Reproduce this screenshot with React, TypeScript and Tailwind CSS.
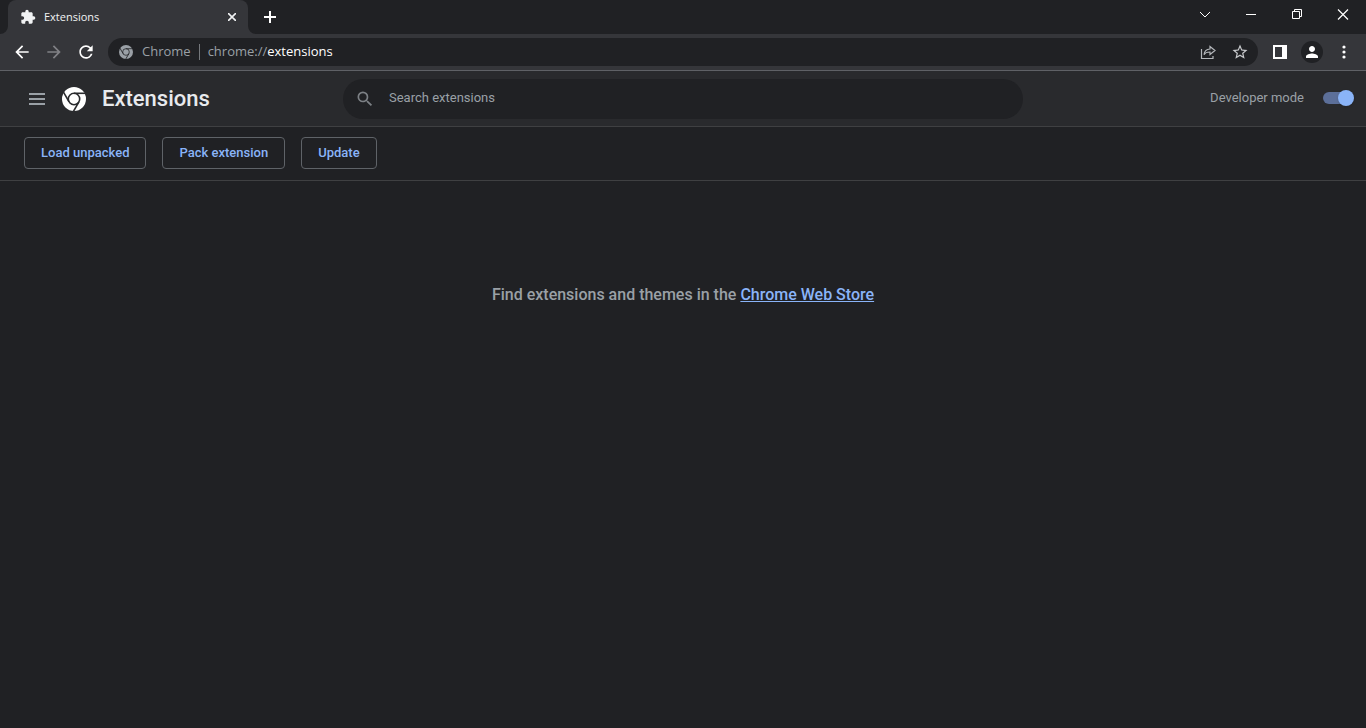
import { useState } from 'react';

function ChromeLogo({ className, bg, gap }: { className: string; bg: string; gap: number }) {
  return (
    <svg viewBox="0 0 24 24" className={className} aria-hidden="true">
      <circle cx="12" cy="12" r="12" fill="currentColor" />
      <g stroke={bg} strokeWidth={gap} fill="none">
        <circle cx="12" cy="12" r="5.7" />
        <path d="M12 6.3H24" />
        <path d="M12 6.3H24" transform="rotate(120 12 12)" />
        <path d="M12 6.3H24" transform="rotate(240 12 12)" />
      </g>
    </svg>
  );
}

function Icon({ d, className }: { d: string; className: string }) {
  return (
    <svg viewBox="0 0 24 24" fill="currentColor" className={className} aria-hidden="true">
      <path d={d} />
    </svg>
  );
}

const PUZZLE =
  'M20.5 11H19V7c0-1.1-.9-2-2-2h-4V3.5a2.5 2.5 0 0 0-5 0V5H4c-1.1 0-2 .9-2 2v3.8h1.5c1.5 0 2.7 1.2 2.7 2.7S5 16.2 3.5 16.2H2V20c0 1.1.9 2 2 2h3.8v-1.5c0-1.5 1.2-2.7 2.7-2.7s2.7 1.2 2.7 2.7V22H17c1.1 0 2-.9 2-2v-4h1.5a2.5 2.5 0 0 0 0-5z';
const BACK = 'M20 11H7.83l5.59-5.59L12 4l-8 8 8 8 1.41-1.41L7.83 13H20v-2z';
const FORWARD = 'M12 4l-1.41 1.41L16.17 11H4v2h12.17l-5.58 5.59L12 20l8-8z';
const RELOAD =
  'M17.65 6.35A7.958 7.958 0 0 0 12 4c-4.42 0-7.99 3.58-7.99 8s3.57 8 7.99 8c3.73 0 6.84-2.55 7.73-6h-2.08A5.99 5.99 0 0 1 12 18c-3.31 0-6-2.69-6-6s2.69-6 6-6c1.66 0 3.14.69 4.22 1.78L13 11h7V4l-2.35 2.35z';
const STAR =
  'M22 9.24l-7.19-.62L12 2 9.19 8.63 2 9.24l5.46 4.73L5.82 21 12 17.27 18.18 21l-1.63-7.03L22 9.24zM12 15.4l-3.76 2.27 1-4.28-3.32-2.88 4.38-.38L12 6.1l1.71 4.04 4.38.38-3.32 2.88 1 4.28L12 15.4z';
const PERSON =
  'M12 12c2.21 0 4-1.79 4-4s-1.79-4-4-4-4 1.79-4 4 1.79 4 4 4zm0 2c-2.67 0-8 1.34-8 4v2h16v-2c0-2.66-5.33-4-8-4z';
const SEARCH =
  'M15.5 14h-.79l-.28-.27A6.471 6.471 0 0 0 16 9.5 6.5 6.5 0 1 0 9.5 16c1.61 0 3.09-.59 4.23-1.57l.27.28v.79l5 4.99L20.49 19l-4.99-5zm-6 0C7.01 14 5 11.99 5 9.5S7.01 5 9.5 5 14 7.01 14 9.5 11.99 14 9.5 14z';
const MENU = 'M4 18h16v-2H4v2zm0-5h16v-2H4v2zm0-7v2h16V6H4z';

function TabStrip() {
  return (
    <div className="flex h-[34px] justify-between bg-[#202124]">
      <div className="flex">
        <svg viewBox="0 0 8 8" className="h-2 w-2 self-end text-[#35363a]" aria-hidden="true">
          <path d="M8 0v8H0a8 8 0 0 0 8-8z" fill="currentColor" />
        </svg>
        <div className="flex w-60 items-center rounded-t-lg bg-[#35363a] pr-2 pl-3 text-[#f1f3f4]">
          <Icon d={PUZZLE} className="h-4 w-4" />
          <span className="ml-2 flex-1 text-[11px]">Extensions</span>
          <button aria-label="Close tab" className="grid h-4 w-4 place-items-center">
            <svg viewBox="0 0 8 8" className="h-2 w-2" stroke="currentColor" strokeWidth="1.6">
              <path d="M0 0l8 8M8 0L0 8" />
            </svg>
          </button>
        </div>
        <svg viewBox="0 0 8 8" className="h-2 w-2 self-end text-[#35363a]" aria-hidden="true">
          <path d="M0 0v8h8a8 8 0 0 1-8-8z" fill="currentColor" />
        </svg>
        <button aria-label="New tab" className="grid w-7 place-items-center text-white">
          <svg viewBox="0 0 12 12" className="h-3 w-3" stroke="currentColor" strokeWidth="2">
            <path d="M6 0v12M0 6h12" />
          </svg>
        </button>
      </div>
      <div className="flex h-7 text-white">
        <button aria-label="Search tabs" className="grid w-[46px] place-items-center">
          <svg viewBox="0 0 12 11" className="h-[11px] w-3" fill="none" stroke="currentColor">
            <path d="M1 3l5 5 5-5" />
          </svg>
        </button>
        <button aria-label="Minimize" className="grid w-[46px] place-items-center">
          <svg viewBox="0 0 12 11" className="h-[11px] w-3" fill="none" stroke="currentColor">
            <path d="M1 5.5h10" />
          </svg>
        </button>
        <button aria-label="Restore" className="grid w-[46px] place-items-center">
          <svg viewBox="0 0 12 11" className="h-[11px] w-3" fill="none" stroke="currentColor">
            <path d="M1.5 2.5h7v7h-7zM3.5 2.5v-2h7v7h-2" />
          </svg>
        </button>
        <button aria-label="Close" className="grid w-[46px] place-items-center">
          <svg viewBox="0 0 12 11" className="h-[11px] w-3" fill="none" stroke="currentColor" strokeWidth="1.2">
            <path d="M1 .5l10 10M11 .5l-10 10" />
          </svg>
        </button>
      </div>
    </div>
  );
}

function AddressBar() {
  return (
    <div className="flex h-[37px] items-center border-b border-[#5f6166] bg-[#35363a] px-1.5">
      <button aria-label="Back" className="grid w-8 place-items-center text-white">
        <Icon d={BACK} className="h-5 w-5" />
      </button>
      <button aria-label="Forward" className="grid w-8 place-items-center text-[#808185]">
        <Icon d={FORWARD} className="h-5 w-5" />
      </button>
      <button aria-label="Reload" className="grid w-8 place-items-center text-white">
        <Icon d={RELOAD} className="h-5 w-5" />
      </button>
      <div className="ml-1.5 flex h-7 flex-1 items-center rounded-full bg-[#202124] pr-0.5 pl-[11px] text-[13px] text-[#9aa0a6]">
        <ChromeLogo className="h-3.5 w-3.5" bg="#202124" gap={1.3} />
        <span className="ml-[9px]">Chrome</span>
        <span className="mx-2 h-4 w-px bg-[#75787c]" />
        <span className="flex-1">
          chrome://<span className="text-white">extensions</span>
        </span>
        <button aria-label="Share this page" className="grid w-8 place-items-center text-[#b4b7bb]">
          <svg viewBox="0 0 16 16" className="h-4 w-4" fill="none" stroke="currentColor" strokeWidth="1.2">
            <path d="M1.5 5v9.5h11.5v-2.5" />
            <path d="M10 2.5l5 4-5 4V8c-3 0-5 .8-6 2.8C4.3 7.5 6.5 5.2 10 5z" />
          </svg>
        </button>
        <button aria-label="Bookmark this page" className="grid w-8 place-items-center text-[#c8cacd]">
          <Icon d={STAR} className="h-[18px] w-[18px]" />
        </button>
      </div>
      <button aria-label="Side panel" className="ml-1.5 grid w-8 place-items-center text-white">
        <svg viewBox="0 0 14 14" className="h-3.5 w-3.5" fill="currentColor">
          <path fillRule="evenodd" d="M0 0h14v14H0zM2 2v10h7V2z" />
        </svg>
      </button>
      <button aria-label="Profile" className="grid w-8 place-items-center text-white">
        <span className="grid h-[22px] w-[22px] place-items-center rounded-full bg-[#202124]">
          <Icon d={PERSON} className="h-[18px] w-[18px]" />
        </span>
      </button>
      <button aria-label="Chrome menu" className="grid w-8 place-items-center text-white">
        <svg viewBox="0 0 4 14" className="h-3.5 w-1" fill="currentColor">
          <circle cx="2" cy="2" r="1.6" />
          <circle cx="2" cy="7" r="1.6" />
          <circle cx="2" cy="12" r="1.6" />
        </svg>
      </button>
    </div>
  );
}

function Header({ dev, onToggle }: { dev: boolean; onToggle: () => void }) {
  return (
    <header className="grid h-14 grid-cols-[1fr_680px_1fr] items-center border-b border-[#3f4042] bg-[#292a2d] text-[13px] text-[#9aa0a6]">
      <div className="flex items-center pl-[25px]">
        <button aria-label="Main menu">
          <Icon d={MENU} className="h-6 w-6" />
        </button>
        <ChromeLogo className="ml-[13px] h-6 w-6 text-white" bg="#292a2d" gap={1.6} />
        <h1 className="ml-4 text-[22px] leading-8 font-medium text-[#e8eaed]">Extensions</h1>
      </div>
      <label className="flex h-10 items-center rounded-full bg-[#202124] pl-3">
        <Icon d={SEARCH} className="h-5 w-5 text-[#7c8085]" />
        <input
          type="text"
          aria-label="Search extensions"
          placeholder="Search extensions"
          className="ml-3.5 flex-1 pb-0.5 outline-none placeholder:text-[#9aa0a6]"
        />
      </label>
      <label className="flex items-center justify-end pr-[11px] pb-0.5">
        <span>Developer mode</span>
        <span className="relative ml-[19px] flex h-4 w-8 items-center">
          <input type="checkbox" role="switch" checked={dev} onChange={onToggle} className="peer h-3 w-[30px] appearance-none rounded-full bg-[#5f6368] checked:bg-[#5c6f99]" />
          <span className="pointer-events-none absolute left-0 h-4 w-4 rounded-full bg-[#dadce0] shadow peer-checked:left-[15px] peer-checked:bg-[#8ab4f8]" />
        </span>
      </label>
    </header>
  );
}

export default function App() {
  const [dev, setDev] = useState(true);
  return (
    <div className="min-h-screen bg-[#202124] font-['Roboto',sans-serif]">
      <div className="font-['Open_Sans',sans-serif]">
        <TabStrip />
        <AddressBar />
      </div>
      <Header dev={dev} onToggle={() => setDev(!dev)} />
      {dev && (
        <div className="flex gap-4 border-b border-[#3f4042] px-6 pt-2.5 pb-[11px]">
          {['Load unpacked', 'Pack extension', 'Update'].map((label) => (
            <button key={label} className="h-8 rounded border border-[#5f6368] px-4 text-[13px] font-medium text-[#8ab4f8]">
              {label}
            </button>
          ))}
        </div>
      )}
      <main className="pt-[102px] text-center text-base font-medium text-[#9aa0a6]">
        Find extensions and themes in the{' '}
        <a href="https://chrome.google.com/webstore" className="text-[#8ab4f8] underline">
          Chrome Web Store
        </a>
      </main>
    </div>
  );
}
